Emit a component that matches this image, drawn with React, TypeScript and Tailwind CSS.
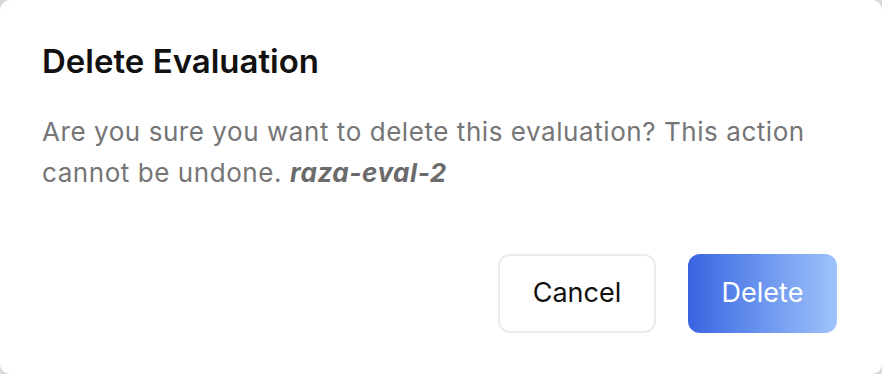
export default function App() {
  return (
    <div className="w-[882px] h-[374px] bg-[#d9d9d9]">
      <div
        className="w-[882px] h-[374px] bg-white rounded-[10px] pl-[42px] pr-[45px] pt-[43px] flex flex-col"
        style={{ fontFamily: 'Inter, "Liberation Sans", sans-serif' }}
      >
        <h2 className="text-[33px] leading-[36px] font-semibold text-[#111111]">
          Delete Evaluation
        </h2>
        <p className="mt-[32px] w-[795px] text-[26px] leading-[41px] tracking-[0.56px] text-[#757575]">
          Are you sure you want to delete this evaluation? This action cannot be undone.{' '}
          <span className="font-bold italic text-[#6b6b6b]">raza-eval-2</span>
        </p>
        <div className="mt-[61px] flex justify-end gap-[32px]">
          <button className="w-[158px] h-[79px] rounded-[12px] border-2 border-[#ebebeb] bg-white text-[27px] text-[#111111]">
            Cancel
          </button>
          <button className="w-[149px] h-[79px] rounded-[12px] bg-gradient-to-r from-[#3a63e0] to-[#a0c3fa] text-[27px] text-white">
            Delete
          </button>
        </div>
      </div>
    </div>
  );
}
